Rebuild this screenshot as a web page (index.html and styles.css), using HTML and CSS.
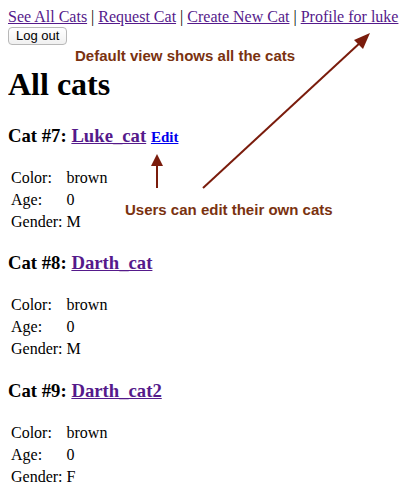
FILE: index.html
```html
<!DOCTYPE html>
<html>
<head>
<meta charset="utf-8">
<link rel="stylesheet" href="styles.css">
</head>
<body>
<div class="nav"><a class="visited" href="#">See All Cats</a> | <a class="visited" href="#">Request Cat</a> | <a class="visited" href="#">Create New Cat</a> | <a class="visited" href="#">Profile for luke</a></div>
<form class="logout"><button type="button" class="btn">Log out</button></form>
<h1>All cats</h1>

<h3>Cat #7: <a class="visited" href="#">Luke_cat</a> <a class="edit" href="#">Edit</a></h3>
<table>
<tr><td>Color:</td><td>brown</td></tr>
<tr><td>Age:</td><td>0</td></tr>
<tr><td>Gender:</td><td>M</td></tr>
</table>

<h3>Cat #8: <a class="visited" href="#">Darth_cat</a></h3>
<table>
<tr><td>Color:</td><td>brown</td></tr>
<tr><td>Age:</td><td>0</td></tr>
<tr><td>Gender:</td><td>M</td></tr>
</table>

<h3>Cat #9: <a class="visited" href="#">Darth_cat2</a></h3>
<table>
<tr><td>Color:</td><td>brown</td></tr>
<tr><td>Age:</td><td>0</td></tr>
<tr><td>Gender:</td><td>F</td></tr>
</table>

<div class="note note-default">Default view shows all the cats</div>
<div class="note note-edit">Users can edit their own cats</div>
<svg class="arrows" width="413" height="502" viewBox="0 0 413 502">
  <line x1="203" y1="188" x2="362" y2="41" stroke="#7a1c0c" stroke-width="2"/>
  <polygon points="370,33 354,40 363,49" fill="#7a1c0c"/>
  <line x1="157" y1="188" x2="157" y2="164" stroke="#7a1c0c" stroke-width="2"/>
  <polygon points="157,154 151,166 163,166" fill="#7a1c0c"/>
</svg>
</body>
</html>
```
FILE: styles.css
```css
html, body {
  background: #ffffff;
}
body {
  margin: 8px;
  font-family: "Liberation Serif", "Times New Roman", serif;
  font-size: 16px;
  color: #000;
  position: relative;
}
a {
  color: #0000ee;
  text-decoration: underline;
}
a.visited {
  color: #551a8b;
}
.nav {
  white-space: nowrap;
}
.logout {
  margin: 0;
}
.btn {
  font-family: "Liberation Sans", Arial, sans-serif;
  font-size: 13px;
  padding: 1px 7px 2px;
  border: 1px solid #b8b8b8;
  border-radius: 4px;
  background: linear-gradient(#ffffff, #f0f0f0);
  color: #000;
  height: 18px;
  line-height: 13px;
  margin: 1px 0 0 0;
}
h1 {
  font-size: 32px;
  margin: 21px 0 22px;
}
h3 {
  font-size: 18.72px;
  margin: 18.72px 0;
}
.edit {
  font-size: 15px;
}
table {
  border-spacing: 2px;
}
td {
  padding: 1px;
}
.note {
  position: absolute;
  font-family: "Liberation Sans", Arial, sans-serif;
  font-weight: bold;
  font-size: 15px;
  color: #7a3210;
  white-space: nowrap;
}
.note-default {
  left: 67px;
  top: 38.5px;
}
.note-edit {
  left: 117px;
  top: 192.5px;
}
.arrows {
  position: absolute;
  left: -8px;
  top: -8px;
  pointer-events: none;
}
```
